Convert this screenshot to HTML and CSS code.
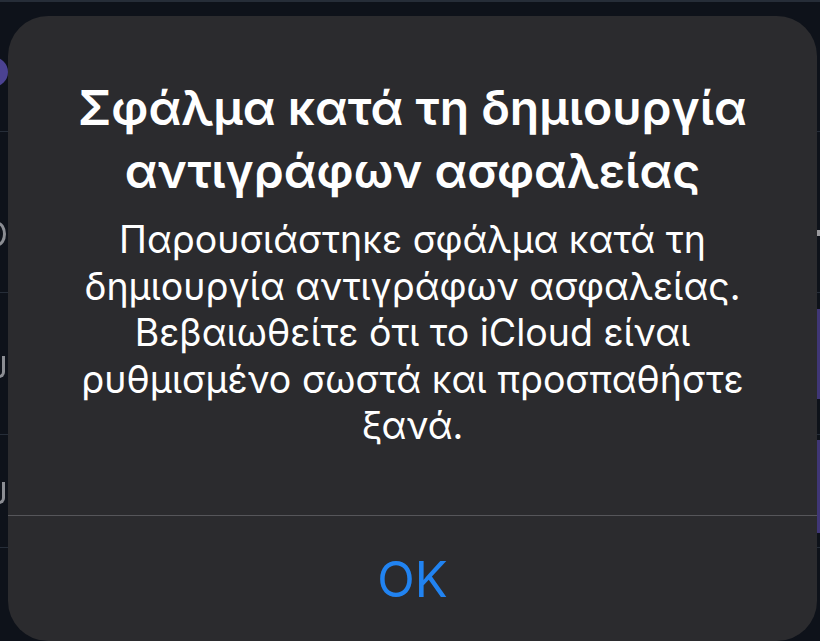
FILE: index.html
```html
<!DOCTYPE html>
<html lang="el">
<head>
    <meta charset="UTF-8">
    <meta name="viewport" content="width=device-width, initial-scale=1.0">
    <title>Σφάλμα</title>
    <link rel="stylesheet" href="styles.css">
</head>
<body>
    <div class="screen">
        <div class="list">
            <div class="row row-1">
                <span class="avatar"></span>
            </div>
            <div class="row row-2">
                <span class="shape shape-round"></span>
                <span class="chip"></span>
            </div>
            <div class="row row-3">
                <span class="shape shape-cup"></span>
                <span class="bar"></span>
            </div>
            <div class="row row-4">
                <span class="shape shape-cup"></span>
                <span class="bar"></span>
            </div>
            <div class="row row-5"></div>
        </div>

        <div class="alert" role="alertdialog">
            <div class="alert-body">
                <h1 class="alert-title">Σφάλμα κατά τη δημιουργία αντιγράφων ασφαλείας</h1>
                <p class="alert-message">Παρουσιάστηκε σφάλμα κατά τη δημιουργία αντιγράφων ασφαλείας. Βεβαιωθείτε ότι το iCloud είναι ρυθμισμένο σωστά και προσπαθήστε ξανά.</p>
            </div>
            <button class="alert-button" type="button">OK</button>
        </div>
    </div>
</body>
</html>
```

FILE: styles.css
```css
:root {
    --screen-bg: #0e121a;
    --row-line: #262d38;
    --alert-bg: #2b2b2e;
    --alert-line: #56565a;
    --text: #ffffff;
    --link: #2183f1;
    --accent: #3f3676;
}

* {
    margin: 0;
    padding: 0;
    box-sizing: border-box;
}

body {
    background: var(--screen-bg);
    font-family: 'Inter', 'Noto Sans', 'DejaVu Sans', sans-serif;
    color: var(--text);
}

.screen {
    position: relative;
    width: 820px;
    height: 641px;
    overflow: hidden;
    border-top: 2px solid var(--row-line);
}

/* list behind the alert */
.list {
    display: flex;
    flex-direction: column;
    height: 100%;
}

.row {
    display: flex;
    justify-content: space-between;
    align-items: center;
    border-bottom: 1px solid var(--row-line);
}

.row-1 { height: 130px; }
.row-2 { height: 161px; align-items: flex-end; padding-bottom: 46px; }
.row-3 { height: 142px; }
.row-4 { height: 113px; }
.row-5 { flex: 1; border-bottom: none; }

.avatar {
    width: 30px;
    height: 30px;
    margin-left: -22px;
    margin-top: 10px;
    border-radius: 50%;
    background: #4b4292;
}

.shape {
    border: 3px solid #8b8d93;
}

.shape-round {
    width: 16px;
    height: 24px;
    margin-left: -10px;
    border-radius: 50%;
}

.shape-cup {
    width: 16px;
    height: 22px;
    margin-left: -11px;
    border-top: none;
    border-radius: 0 0 6px 6px;
}

.row-3 .shape-cup { margin-top: 6px; }
.row-4 .shape-cup { margin-top: 4px; }

.chip {
    width: 8px;
    height: 6px;
    margin-right: -4px;
    margin-bottom: 10px;
    background: #9a9a9e;
}

.bar {
    width: 6px;
    margin-right: -3px;
    background: var(--accent);
}

.row-3 .bar {
    height: 90px;
    margin-top: -20px;
}

.row-4 .bar {
    height: 93px;
    margin-top: -10px;
}

/* alert */
.alert {
    position: absolute;
    left: 8px;
    top: 14px;
    width: 809px;
    height: 625px;
    background: var(--alert-bg);
    border-radius: 40px;
    display: flex;
    flex-direction: column;
    text-align: center;
}

.alert-body {
    padding: 60px 58px 0;
    height: 500px;
    display: flex;
    flex-direction: column;
    gap: 15px;
    border-bottom: 1px solid var(--alert-line);
}

.alert-title {
    font-size: 48px;
    font-weight: 600;
    line-height: 63px;
}

.alert-message {
    font-size: 37.5px;
    font-weight: 400;
    line-height: 46.5px;
}

.alert-button {
    flex: 1;
    background: none;
    border: none;
    color: var(--link);
    font-family: inherit;
    font-size: 49px;
    font-weight: 400;
    padding-top: 2px;
}
```
